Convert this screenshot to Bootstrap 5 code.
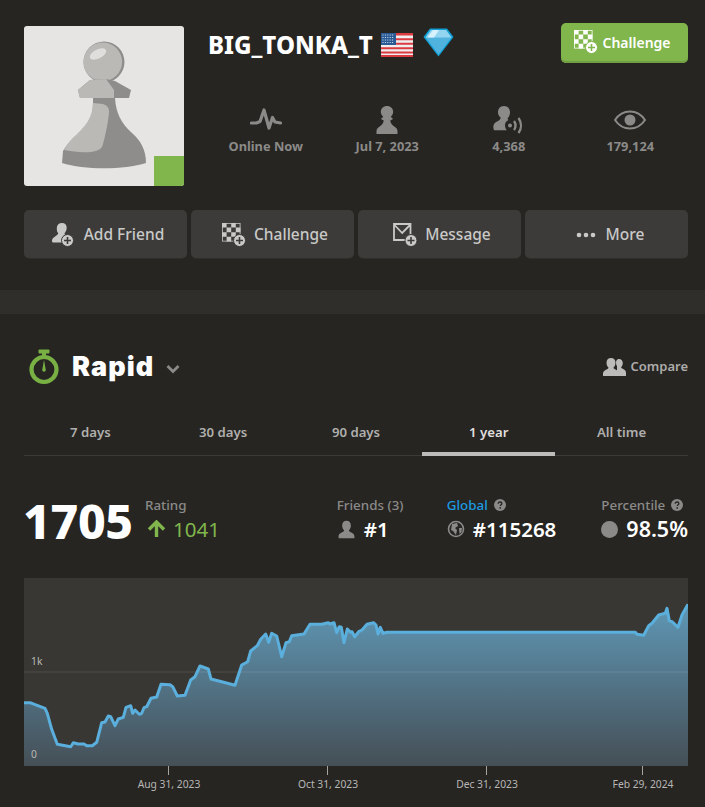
<!DOCTYPE html>
<html lang="en">
<head>
<meta charset="utf-8">
<title>BIG_TONKA_T</title>
<link href="https://cdn.jsdelivr.net/npm/bootstrap@5.3.0/dist/css/bootstrap.min.css" rel="stylesheet">
<style>
html,body{background:#262522;}
body{font-family:"Noto Sans",sans-serif;color:#fff;width:705px;overflow-x:hidden;--ib:#3c3b39;}
.pg-top{padding:23px 17px 32px 24px;}
.avatar-box{width:160px;height:160px;margin-top:3px;background:#e6e5e3;border-radius:3px;overflow:hidden;flex:none;}
.avatar-dot{right:0;bottom:0;width:30px;height:30px;background:#81b64c;}
.head-col{width:480px;margin-left:24px;}
.user-name{font-size:24px;font-weight:800;line-height:30px;margin-top:7px;}
.flag-ico{margin-left:8px;}
.gem-ico{margin-left:10px;margin-top:-5px;}
.btn-play{--bs-btn-color:#fff;--bs-btn-bg:#81b64c;--bs-btn-hover-bg:#81b64c;--bs-btn-hover-color:#fff;width:127px;height:40px;padding:0 4px 2px 0;border:0;border-radius:5px;font-size:14px;font-weight:600;box-shadow:inset 0 -2px 0 #719f43;--ib:#81b64c;}
.stat-row{margin-top:43px;margin-left:-3px;width:486px;}
.stat-cell{width:121.5px;color:#8b8a88;font-size:12.8px;font-weight:700;line-height:18px;}
.stat-ico{height:28px;margin-bottom:3px;}
.act-row{margin-top:24px;gap:4px;}
.btn-act{--bs-btn-color:#c9c9c8;--bs-btn-bg:#3c3b39;--bs-btn-hover-bg:#3c3b39;--bs-btn-hover-color:#c9c9c8;width:163px;height:48px;padding:2px 0 0 5px;border:0;border-radius:5px;font-size:15.5px;font-weight:500;box-shadow:0 1px 0 #2f2e2b;}
.band-sep{height:24px;background:#2f2e2b;}
.pg-stats{padding:35px 17px 0 24px;}
.watch-ico{margin-left:5px;}
.rapid-word{font-family:Inter,sans-serif;font-size:27px;font-weight:900;line-height:36px;letter-spacing:1.1px;margin-left:13px;}
.chev-ico{margin-left:12px;margin-top:3px;}
.cmp-link{color:#adacaa;font-size:13px;font-weight:600;}
.tab-row{margin-top:25px;border-bottom:1px solid #3c3b39;height:46px;}
.tab-row .nav-link{color:#b0afad;font-size:13.2px;font-weight:600;height:46px;line-height:44px;padding:0;}
.tab-row .nav-link.active{color:#e0dfdd;border-bottom:4px solid #bdbcba;}
.rate-row{margin-top:40px;height:74px;}
.big-rate{font-size:48px;font-weight:800;line-height:50px;width:121px;letter-spacing:-.3px;margin-left:-1px;margin-right:1px;}
.rate-lbl{font-size:13.4px;font-weight:500;color:#8b8a88;line-height:18px;}
.rate-gain{color:#81b64c;font-size:20.5px;line-height:28px;margin-top:1px;}
.gain-arrow{margin-left:2px;margin-right:7px;}
.rank-val{font-size:20.5px;font-weight:600;line-height:28px;color:#fff;margin-top:1px;}
.rank-pct{font-size:21.5px;}
.rank-blue{color:#1b9ae0;}
.rank-grp{gap:45px;margin-left:auto;}
.rank-first{width:65px;white-space:nowrap;}
.q-ico{margin-left:2px;}
.graph-wrap{margin-top:8px;}
.graph-wrap svg{display:block;}
.ax-txt{font-family:"Noto Sans",sans-serif;font-size:10.3px;fill:#b8b7b5;}
</style>
</head>
<body>
<svg width="0" height="0" class="d-block" aria-hidden="true">
<defs>
<symbol id="i-check" viewBox="0 0 24 24">
<path fill="currentColor" fill-rule="evenodd" d="M0 0h18.500v18.500H0zM.8.800v17h16.900v-17z"/>
<path fill="currentColor" d="M0 0h4.600v4.600H0zM9.200 0h4.600v4.600H9.200zM4.600 4.600h4.600v4.600H4.600zM13.800 4.600h4.600v4.600h-4.600zM0 9.200h4.600v4.600H0zM9.200 9.200h4.600v4.600H9.200zM4.600 13.800h4.600v4.600H4.600z"/>
<circle cx="17.500" cy="17.500" r="6" fill="currentColor" stroke="var(--ib)" stroke-width="1"/>
<path d="M17.500 14v7M14 17.500h7" stroke="var(--ib)" stroke-width="1.600"/>
</symbol>
<symbol id="i-addf" viewBox="0 0 24 24">
<path fill="currentColor" d="M10 0c3 0 4.700 2 4.700 4.800 0 2.200-.9 4-2 5.200-.3.500 0 1.200.4 1.800-2.800 1.200-3.800 4-3 7.600H1.200C.2 19.400 0 18.800 0 18c0-4 4.500-4.500 6-7 .2-.5.200-.8-.1-1.200C4.800 8.500 4.800 6.500 4.800 4.800 5 2 7 0 10 0z"/>
<circle cx="15.500" cy="17.500" r="6" fill="currentColor" stroke="var(--ib)" stroke-width="1"/>
<path d="M15.500 14v7M12 17.500h7" stroke="var(--ib)" stroke-width="1.600"/>
</symbol>
<symbol id="i-mail" viewBox="0 0 24 24">
<path fill="none" stroke="currentColor" stroke-width="1.800" d="M1 1h16.500v16H1zM1 1.500l8.200 8.500 8.300-8.500"/>
<circle cx="18" cy="17.500" r="6" fill="currentColor" stroke="var(--ib)" stroke-width="1"/>
<path d="M18 14v7M14.500 17.500h7" stroke="var(--ib)" stroke-width="1.600"/>
</symbol>
<symbol id="i-pawn" viewBox="0 0 24 24">
<path fill="currentColor" d="M12 0c3.100 0 5.300 2.200 5.300 5 0 1.800-.9 3.300-2.100 4.200l2 2-2.400 1.200c.3 2.700 2.100 4.300 4.600 6.100 1.100.9 1.600 2.100 1.600 3.300v2.200H3v-2.200c0-1.200.5-2.400 1.600-3.300 2.500-1.800 4.300-3.400 4.600-6.100L6.800 11.200l2-2C7.600 8.300 6.700 6.800 6.700 5 6.700 2.200 8.900 0 12 0z"/>
</symbol>
<symbol id="i-person" viewBox="0 0 24 24">
<path fill="currentColor" d="M12 1c3.400 0 5.500 2.500 5.500 5.800 0 2.500-1 4.500-2.200 5.800-.4.600-.1 1.300.5 1.800 2 1.500 6.200 2.400 6.200 6v2.600h-20v-2.600c0-3.600 4.200-4.500 6.200-6 .6-.5.900-1.200.5-1.800C7.500 11.300 6.500 9.300 6.500 6.800 6.500 3.500 8.600 1 12 1z"/>
</symbol>
<symbol id="i-q" viewBox="0 0 12 12">
<circle cx="6" cy="6" r="6" fill="#8b8a88"/>
<path d="M4.200 4.700c0-1.100.8-1.700 1.900-1.700 1 0 1.800.6 1.800 1.500 0 1.300-1.600 1.300-1.600 2.600" fill="none" stroke="#262522" stroke-width="1.300"/>
<circle cx="6.200" cy="8.900" r=".85" fill="#262522"/>
</symbol>
</defs>
</svg>

<header class="pg-top">
  <div class="d-flex">
    <div class="avatar-box position-relative">
      <svg width="160" height="160" viewBox="24 26 160 160" role="img" aria-label="Pawn avatar">
        <circle cx="104" cy="62" r="20.500" fill="#8e8d8b"/>
        <circle cx="102.800" cy="61.800" r="19.300" fill="#bab9b6"/>
        <ellipse cx="98" cy="54" rx="9" ry="4.500" transform="rotate(-27 98 54)" fill="#dfdedc"/>
        <path d="M78 90l12-10 16-1 9 2 16 9-2 8H80z" fill="#8e8d8b"/>
        <path d="M78 90l12-10 16-1 8 11v8H80z" fill="#bab9b6"/>
        <path d="M93 98h22c1 15 6 25 17 35 9 8 14 17 14 30-22 7-62 7-84 0l1-12c7-13 22-20 28-34 2-6 2-13 2-19z" fill="#8e8d8b"/>
        <path d="M93 103l10 1c3 1 6 3 6 7 0 8-4 26-6 33-1 5-5 7-12 8-9 1-19-.5-27-2 6-13 20-19 26-33 2-5 3-9 3-14z" fill="#bab9b6"/>
      </svg>
      <div class="avatar-dot position-absolute"></div>
    </div>
    <div class="head-col">
      <div class="d-flex justify-content-between align-items-start">
        <div class="user-name d-flex align-items-center">
          <span>BIG_TONKA_T</span>
          <svg class="flag-ico" width="32" height="24" viewBox="0 0 32 24" role="img" aria-label="United States flag">
            <rect width="32" height="24" fill="#eee"/>
            <path fill="#dc3a41" d="M0 0h32v2.600H0zM0 5.300h32v2H0zM0 9.800h32v2H0zM0 14.300h32v2H0zM0 18.500h32v2H0zM0 22h32v2H0z"/>
            <rect width="15" height="12" fill="#2a5b95"/>
            <path d="M1.500 2h12M1.500 4.500h12M1.500 7h12M1.500 9.500h12" stroke="#d8e2ee" stroke-width="1" stroke-dasharray="1 1.400"/>
          </svg>
          <svg class="gem-ico" width="31" height="29" viewBox="0 0 31 29" role="img" aria-label="Diamond">
            <path d="M7 .5h17l6.500 8.500L15.500 28.500.5 9z" fill="#10a0d6"/>
            <path d="M8 2h15l5.500 7.500-13 17-13-17z" fill="#4fb3de"/>
            <path d="M8 2h15l5.500 7.500h-26z" fill="#93d5f1"/>
            <path d="M10 2h6l-5 7.500H4.500z" fill="#d8f1fb"/>
          </svg>
        </div>
        <button type="button" class="btn btn-play d-flex align-items-center justify-content-center gap-1">
          <svg width="24" height="24" viewBox="0 0 24 24" aria-hidden="true"><use href="#i-check"/></svg>
          <span>Challenge</span>
        </button>
      </div>
      <div class="stat-row d-flex text-center">
        <div class="stat-cell">
          <div class="stat-ico"><svg width="32" height="28" viewBox="0 0 32 28" aria-hidden="true"><path d="M1.500 17h5l3.500-1.500L14 4l5 18 3.500-10.500 2.500 4.500 5.500 1" fill="none" stroke="#8b8a88" stroke-width="3.200" stroke-linejoin="round" stroke-linecap="round"/></svg></div>
          <div>Online Now</div>
        </div>
        <div class="stat-cell">
          <div class="stat-ico"><svg width="28" height="28" viewBox="0 0 24 24" aria-hidden="true"><use href="#i-pawn"/></svg></div>
          <div>Jul 7, 2023</div>
        </div>
        <div class="stat-cell">
          <div class="stat-ico"><svg width="32" height="28" viewBox="0 0 32 28" aria-hidden="true">
            <path fill="#8b8a88" d="M11 0c3.800 0 6 2.800 6 6.200 0 2.500-.9 4.500-2.200 5.800-.4.600 0 1.500.6 2-2.200 1-3.600 3.200-3.400 5.800.1 1.800.8 3.200 1.800 4.400H1c-1.500-4-.5-7 3-8.800 1.500-.8 3-1.500 3.500-3 .2-.5 0-.9-.3-1.300C5.800 10.100 5 8 5 6.200 5 2.800 7.200 0 11 0z"/>
            <circle cx="17" cy="19.500" r="2" fill="#8b8a88"/>
            <path d="M21 15c2 2.500 2 6.500 0 9M25.500 12c3.200 4.500 3.200 10.500 0 15" fill="none" stroke="#8b8a88" stroke-width="2.400"/>
          </svg></div>
          <div>4,368</div>
        </div>
        <div class="stat-cell">
          <div class="stat-ico"><svg width="32" height="28" viewBox="0 0 32 28" aria-hidden="true">
            <path d="M1 14C5 8 10 5.500 16 5.500S27 8 31 14c-4 6-9 8.500-15 8.500S5 20 1 14z" fill="none" stroke="#8b8a88" stroke-width="2"/>
            <circle cx="16" cy="14" r="5.500" fill="#8b8a88"/>
          </svg></div>
          <div>179,124</div>
        </div>
      </div>
    </div>
  </div>
  <div class="act-row d-flex">
    <button type="button" class="btn btn-act d-flex align-items-center justify-content-center gap-2"><svg width="24" height="24" viewBox="0 0 24 24" aria-hidden="true"><use href="#i-addf"/></svg><span>Add Friend</span></button>
    <button type="button" class="btn btn-act d-flex align-items-center justify-content-center gap-2"><svg width="24" height="24" viewBox="0 0 24 24" aria-hidden="true"><use href="#i-check"/></svg><span>Challenge</span></button>
    <button type="button" class="btn btn-act d-flex align-items-center justify-content-center gap-2"><svg width="24" height="24" viewBox="0 0 24 24" aria-hidden="true"><use href="#i-mail"/></svg><span>Message</span></button>
    <button type="button" class="btn btn-act d-flex align-items-center justify-content-center gap-2"><svg width="24" height="24" viewBox="0 0 24 24" aria-hidden="true"><g fill="currentColor"><circle cx="5" cy="12" r="2.300"/><circle cx="12" cy="12" r="2.300"/><circle cx="19" cy="12" r="2.300"/></g></svg><span>More</span></button>
  </div>
</header>

<div class="band-sep"></div>

<main class="pg-stats">
  <div class="d-flex align-items-center justify-content-between">
    <div class="d-flex align-items-center">
      <svg class="watch-ico" width="30" height="36" viewBox="0 0 30 36" aria-hidden="true">
        <rect x="9.500" y="0.500" width="11" height="4" rx="1" fill="#78b044"/>
        <rect x="13" y="3" width="4" height="5" fill="#78b044"/>
        <circle cx="15" cy="20.500" r="12.500" fill="none" stroke="#78b044" stroke-width="4.200"/>
        <path d="M15 11l1.800 10a1.800 1.800 0 0 1-3.600 0z" fill="#78b044"/>
      </svg>
      <span class="rapid-word">Rapid</span>
      <svg class="chev-ico" width="14" height="10" viewBox="0 0 14 10" aria-hidden="true"><path d="M1.500 2l5.500 5.500L12.500 2" fill="none" stroke="#8b8a88" stroke-width="2.800"/></svg>
    </div>
    <div class="cmp-link d-flex align-items-center gap-1">
      <svg width="23" height="20" viewBox="0 0 23 20" aria-hidden="true"><g fill="#bcbbb9"><path d="M16 2c2.400 0 3.800 1.800 3.800 4 0 1.700-.7 3-1.500 3.900-.3.500 0 1 .5 1.300 1.400 1 4.200 1.700 4.200 4.300V19h-9V9l-.6-.8C12.400 4.500 13.500 2 16 2z"/><path d="M8 1c2.800 0 4.500 2 4.500 4.700 0 2-.8 3.500-1.800 4.600-.3.500 0 1.100.5 1.500 1.600 1.200 4.800 2 4.800 5V19H0v-2.200c0-3 3.200-3.800 4.800-5 .5-.4.800-1 .5-1.500-1-1.100-1.800-2.600-1.800-4.600C3.500 3 5.200 1 8 1z"/></g></svg>
      <span>Compare</span>
    </div>
  </div>

  <nav class="nav nav-justified tab-row">
    <a class="nav-link" href="#">7 days</a>
    <a class="nav-link" href="#">30 days</a>
    <a class="nav-link" href="#">90 days</a>
    <a class="nav-link active" href="#">1 year</a>
    <a class="nav-link" href="#">All time</a>
  </nav>

  <div class="rate-row d-flex">
    <div class="big-rate">1705</div>
    <div>
      <div class="rate-lbl">Rating</div>
      <div class="rate-gain d-flex align-items-center">
        <svg width="19" height="18" viewBox="0 0 19 18" class="gain-arrow" aria-hidden="true"><path d="M9.500 17V3M2 9.500L9.500 2 17 9.500" fill="none" stroke="#81b64c" stroke-width="3.400"/></svg>
        <span>1041</span>
      </div>
    </div>
    <div class="rank-grp d-flex">
      <div class="rank-first">
        <div class="rate-lbl">Friends (3)</div>
        <div class="rank-val d-flex align-items-center gap-2"><svg width="19" height="19" viewBox="0 0 24 24" aria-hidden="true" color="#8b8a88"><use href="#i-person"/></svg><span>#1</span></div>
      </div>
      <div>
        <div class="rate-lbl d-flex align-items-center gap-1"><span class="rank-blue">Global</span><svg width="12" height="12" class="q-ico" aria-hidden="true"><use href="#i-q"/></svg></div>
        <div class="rank-val d-flex align-items-center gap-2"><svg width="18" height="18" viewBox="0 0 18 18" aria-hidden="true"><circle cx="9" cy="9" r="7.500" fill="none" stroke="#8b8a88" stroke-width="1.600"/><path d="M5 4l5-1 1 3-3 2 2 2-1 5-3-4-2-1zM12 8l3 0-.5 4-2 2z" fill="#8b8a88"/></svg><span>#115268</span></div>
      </div>
      <div>
        <div class="rate-lbl d-flex align-items-center gap-1"><span>Percentile</span><svg width="12" height="12" class="q-ico" aria-hidden="true"><use href="#i-q"/></svg></div>
        <div class="rank-val rank-pct d-flex align-items-center gap-2"><svg width="17" height="17" viewBox="0 0 17 17" aria-hidden="true"><circle cx="8.500" cy="8.500" r="8.500" fill="#8b8a88"/></svg><span>98.5%</span></div>
      </div>
    </div>
  </div>

  <div class="graph-wrap">
    <svg width="664" height="218" viewBox="24 578 664 218" role="img" aria-label="Rating chart">
      <defs>
        <linearGradient id="fillGrad" gradientUnits="userSpaceOnUse" x1="0" y1="605" x2="0" y2="766">
          <stop offset="0" stop-color="#5f97b5"/>
          <stop offset="1" stop-color="#454f56"/>
        </linearGradient>
      </defs>
      <rect x="24" y="578" width="664" height="188" fill="#393734"/>
      <path id="area" fill="url(#fillGrad)" d="M24 702.700L30 702.700 45 708.300 47.300 713.300 51.700 729.300 57.300 744.300 70.700 746.700 73.300 742.700 78.300 744 84 744 86.700 745.700 92.300 745.700 96.700 742.300 101.700 722.700 105 722 108.300 716 110.700 716.700 115 725.700 118.300 719 123.300 717.300 126 707.300 130.700 705.700 132.700 713.300 135 710 139.300 714.300 141.700 713.300 144 707.700 146.700 706.700 151 698.300 156.700 697 161 684.300 170 684.700 172.700 686.700 177.300 696 185 695.300 190.700 680 195 676.700 200 666 208.300 669 211 679 221.700 681.700 235 685.300 241.700 665 247.700 661.700 250.700 651 257.300 645.700 260.700 639.300 265.700 634 268.700 642.300 271.700 633.300 276.700 636 281.700 656.700 286 642.700 289.300 641.700 291.700 635.700 304 634 310 624.300 321.700 624.300 328.300 622.700 330 624 334 622.700 336.700 632.700 339.300 626.700 341.300 627.300 344 642.700 347.300 629 350.700 632.300 352 631.700 354.700 636.700 358.700 631.700 362 630 367 624.300 373.700 622.700 376 625 378 634 380.300 627.300 383 633.300 387 632.300 635.300 632.300 637 634.300 643.700 635.300 648.700 625.700 652 623.300 658.700 615 665.300 613.300 667 608.300 669.300 620.700 672 621.700 678 627.300 682 615 688 604.300V766H24Z"/>
      <path d="M24 672H688" stroke="#fff" stroke-opacity=".12" stroke-width="1"/>
      <path fill="none" stroke="#5bafdc" stroke-width="3" stroke-linejoin="round" d="M24 702.700L30 702.700 45 708.300 47.300 713.300 51.700 729.300 57.300 744.300 70.700 746.700 73.300 742.700 78.300 744 84 744 86.700 745.700 92.300 745.700 96.700 742.300 101.700 722.700 105 722 108.300 716 110.700 716.700 115 725.700 118.300 719 123.300 717.300 126 707.300 130.700 705.700 132.700 713.300 135 710 139.300 714.300 141.700 713.300 144 707.700 146.700 706.700 151 698.300 156.700 697 161 684.300 170 684.700 172.700 686.700 177.300 696 185 695.300 190.700 680 195 676.700 200 666 208.300 669 211 679 221.700 681.700 235 685.300 241.700 665 247.700 661.700 250.700 651 257.300 645.700 260.700 639.300 265.700 634 268.700 642.300 271.700 633.300 276.700 636 281.700 656.700 286 642.700 289.300 641.700 291.700 635.700 304 634 310 624.300 321.700 624.300 328.300 622.700 330 624 334 622.700 336.700 632.700 339.300 626.700 341.300 627.300 344 642.700 347.300 629 350.700 632.300 352 631.700 354.700 636.700 358.700 631.700 362 630 367 624.300 373.700 622.700 376 625 378 634 380.300 627.300 383 633.300 387 632.300 635.300 632.300 637 634.300 643.700 635.300 648.700 625.700 652 623.300 658.700 615 665.300 613.300 667 608.300 669.300 620.700 672 621.700 678 627.300 682 615 688 604.300"/>
      <text class="ax-txt" x="31" y="665">1k</text>
      <text class="ax-txt" x="31" y="758">0</text>
      <path d="M168.500 766v9M327.500 766v9M486.500 766v9M642.500 766v9" stroke="#a5a4a2" stroke-width="1"/>
      <text class="ax-txt" x="169" y="788" text-anchor="middle">Aug 31, 2023</text>
      <text class="ax-txt" x="328" y="788" text-anchor="middle">Oct 31, 2023</text>
      <text class="ax-txt" x="487" y="788" text-anchor="middle">Dec 31, 2023</text>
      <text class="ax-txt" x="643" y="788" text-anchor="middle">Feb 29, 2024</text>
    </svg>
  </div>
</main>
<script src="https://cdn.jsdelivr.net/npm/bootstrap@5.3.0/dist/js/bootstrap.bundle.min.js"></script>
</body>
</html>
